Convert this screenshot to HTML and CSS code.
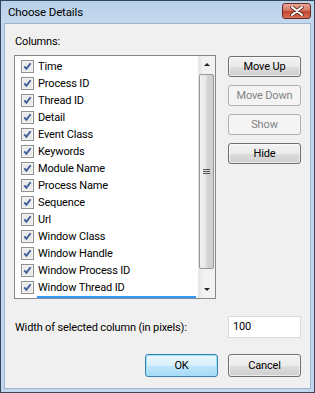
FILE: index.html
```html
<!DOCTYPE html>
<html lang="en">
<head>
    <meta charset="UTF-8">
    <title>Choose Details</title>
    <link rel="stylesheet" href="styles.css">
</head>
<body>
    <div class="window">
        <div class="titlebar">
            <span class="title">Choose Details</span>
            <div class="close">
                <svg width="14" height="10" viewBox="0 0 14 10">
                    <path d="M2 1 L12 9 M12 1 L2 9" stroke="#5a2a22" stroke-width="3.6" stroke-linecap="round"/>
                    <path d="M2 1 L12 9 M12 1 L2 9" stroke="#fff" stroke-width="2" stroke-linecap="round"/>
                </svg>
            </div>
        </div>
        <div class="client">
            <div class="label">Columns:</div>
            <div class="main">
                <div class="listbox">
                    <div class="items" id="items"></div>
                    <div class="scrollbar">
                        <div class="sb-btn"><span class="arrow-up"></span></div>
                        <div class="sb-track">
                            <div class="thumb"><span class="grip"></span></div>
                        </div>
                        <div class="sb-btn"><span class="arrow-down"></span></div>
                    </div>
                </div>
                <div class="side">
                    <button class="btn">Move Up</button>
                    <button class="btn" disabled>Move Down</button>
                    <button class="btn" disabled>Show</button>
                    <button class="btn">Hide</button>
                </div>
            </div>
            <div class="width-row">
                <span>Width of selected column (in pixels):</span>
                <div class="textbox">100</div>
            </div>
            <div class="footer">
                <button class="btn btn-big default">OK</button>
                <button class="btn btn-big">Cancel</button>
            </div>
        </div>
    </div>

    <script>
        // list of column names
        const columns = ['Time', 'Process ID', 'Thread ID', 'Detail', 'Event Class', 'Keywords',
            'Module Name', 'Process Name', 'Sequence', 'Url', 'Window Class', 'Window Handle',
            'Window Process ID', 'Window Thread ID'];

        const check = '<svg class="check" width="13" height="13" viewBox="0 0 13 13">' +
            '<rect x="0.5" y="0.5" width="12" height="12" fill="#fff" stroke="#8e8f8f"/>' +
            '<rect x="1.5" y="1.5" width="10" height="10" fill="#eaeaea" stroke="#f4f4f4"/>' +
            '<path d="M3.3 6.4 L5.4 8.8 L9.6 3.2" fill="none" stroke="#3e5c9a" stroke-width="1.9"/>' +
            '</svg>';

        const box = document.getElementById('items');
        columns.forEach(function (name) {
            const row = document.createElement('div');
            row.className = 'row';
            row.innerHTML = check + '<span>' + name + '</span>';
            box.appendChild(row);
        });
        const marker = document.createElement('div');
        marker.className = 'drop-line';
        box.appendChild(marker);
    </script>
</body>
</html>
```

FILE: styles.css
```css
body {
    margin: 0;
    font-family: Roboto, "Noto Sans", sans-serif;
    font-size: 11px;
    letter-spacing: -0.15px;
    color: #000;
}

.window {
    width: 315px;
    height: 393px;
    box-sizing: border-box;
    border: 1px solid #35475a;
    background: #c2d7ed;
    padding: 0 3px 3px 3px;
    display: flex;
    flex-direction: column;
}

.titlebar {
    height: 22px;
    display: flex;
    align-items: center;
    justify-content: space-between;
    background: linear-gradient(#b9d1ea, #c4d8ee);
    margin: 0 -3px;
    padding: 0 3px 0 7px;
}

.title {
    font-size: 11.5px;
    color: #000;
}

.close {
    width: 27px;
    height: 14px;
    margin-top: -3px;
    border: 1px solid #6c2b21;
    border-radius: 3px;
    background: linear-gradient(#e9a99c, #d3705d 50%, #c0442e 51%, #d86f57);
    display: flex;
    align-items: center;
    justify-content: center;
}

.client {
    flex: 1;
    background: #f0f0f0;
    border: 1px solid #9fb5cc;
    padding: 10px 9px 0 9px;
}

.label {
    line-height: 16px;
    margin-bottom: 5px;
    padding-left: 1px;
}

.main {
    display: flex;
    gap: 12px;
}

.listbox {
    width: 200px;
    height: 242px;
    border: 1px solid #828790;
    background: #fff;
    display: flex;
}

.items {
    flex: 1;
    padding-top: 2px;
    overflow: hidden;
}

.row {
    height: 17px;
    display: flex;
    align-items: center;
    padding-left: 6px;
    white-space: nowrap;
}

.check {
    flex: none;
    margin-right: 4px;
}

.drop-line {
    height: 2px;
    margin-left: 22px;
    margin-right: 2px;
    background: #3399ff;
}

.scrollbar {
    width: 17px;
    display: flex;
    flex-direction: column;
    background: linear-gradient(90deg, #e3e3e3, #f2f2f2 30%, #f2f2f2);
}

.sb-btn {
    height: 17px;
    display: flex;
    align-items: center;
    justify-content: center;
}

.arrow-up {
    border-left: 3px solid transparent;
    border-right: 3px solid transparent;
    border-bottom: 3px solid #222;
}

.arrow-down {
    border-left: 3px solid transparent;
    border-right: 3px solid transparent;
    border-top: 3px solid #222;
}

.sb-track {
    flex: 1;
    padding: 1px 0 12px 0;
    display: flex;
}

.thumb {
    flex: 1;
    margin: 0 1px;
    border: 1px solid #979797;
    border-radius: 2px;
    background: linear-gradient(90deg, #f2f2f2, #e6e6e6 45%, #d4d4d4 55%, #cfcfcf);
    display: flex;
    align-items: center;
    justify-content: center;
}

.grip {
    width: 7px;
    height: 5px;
    background: repeating-linear-gradient(#555 0 1px, transparent 1px 2px);
}

.side {
    display: flex;
    flex-direction: column;
    gap: 8px;
    padding-top: 1px;
}

.btn {
    width: 73px;
    height: 21px;
    padding: 0;
    font-family: inherit;
    font-size: 11px;
    letter-spacing: inherit;
    color: #000;
    border: 1px solid #707070;
    border-radius: 3px;
    background: linear-gradient(#f2f2f2, #ebebeb 50%, #dddddd 51%, #cfcfcf);
    box-shadow: inset 0 0 0 1px rgba(255,255,255,0.6);
}

.btn:disabled {
    color: #838383;
    border-color: #adb2b5;
    background: #f4f4f4;
    box-shadow: none;
}

.width-row {
    display: flex;
    align-items: center;
    justify-content: space-between;
    margin-top: 17px;
    padding-left: 1px;
}

.textbox {
    width: 71px;
    height: 20px;
    line-height: 20px;
    border: 1px solid #d7dce2;
    background: #fff;
    padding-left: 0;
    text-indent: 4px;
}

.footer {
    display: flex;
    justify-content: flex-end;
    gap: 10px;
    margin-top: 16px;
}

.btn-big {
    height: 23px;
}

.default {
    border-color: #3c7fb1;
    background: linear-gradient(#eaf6fd, #d9f0fc 50%, #bee6fd 51%, #a7d9f5);
    box-shadow: inset 0 0 0 1px #9ee2fa;
}
```
